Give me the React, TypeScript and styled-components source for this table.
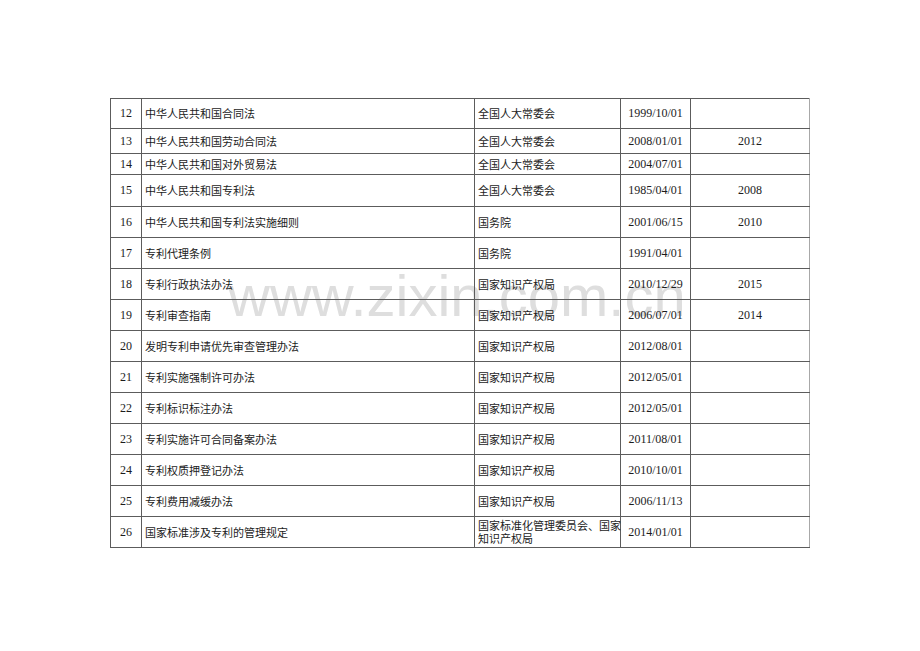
import React from "react";
import styled, { createGlobalStyle } from "styled-components";

const GlobalStyle = createGlobalStyle`
    html, body {
        margin: 0;
        padding: 0;
        background: #ffffff;
    }
`;

const Page = styled.div`
    position: relative;
    width: 920px;
    height: 651px;
    padding: 98px 0 0 110px;
    box-sizing: border-box;
    background: #ffffff;
    overflow: hidden;
`;

const Watermark = styled.div`
    position: absolute;
    left: 228px;
    top: 267px;
    font-family: "Liberation Sans", Arial, sans-serif;
    font-size: 58px;
    line-height: 1;
    color: #dedede;
    white-space: nowrap;
    pointer-events: none;
    z-index: 0;
`;

const Table = styled.table`
    position: relative;
    z-index: 1;
    border-collapse: collapse;
    table-layout: fixed;
    width: 700px;
    color: #1c1c1c;
`;

const Col = styled.col<{ $w: number }>`
    width: ${(p) => p.$w}px;
`;

const Row = styled.tr<{ $h: number }>`
    height: ${(p) => p.$h}px;
`;

const Cell = styled.td<{ $align?: "left" | "center"; $num?: boolean }>`
    border: 1px solid #5c5c5c;
    padding: 0 0 0 ${(p) => (p.$align === "center" ? 0 : 3)}px;
    text-align: ${(p) => p.$align ?? "left"};
    vertical-align: middle;
    font-family: ${(p) =>
        p.$num
            ? `"Liberation Serif", "Times New Roman", serif`
            : `"Noto Sans CJK SC", sans-serif`};
    font-size: ${(p) => (p.$num ? 12 : 11)}px;
    line-height: 13px;
    white-space: pre;

    &:last-child {
        border-right-color: #a8a8a8;
    }
`;

type Law = {
    no: number;
    name: string;
    org: string;
    date: string;
    rev?: string;
    h?: number;
};

const laws: Law[] = [
    { no: 12, name: "中华人民共和国合同法", org: "全国人大常委会", date: "1999/10/01", h: 30 },
    { no: 13, name: "中华人民共和国劳动合同法", org: "全国人大常委会", date: "2008/01/01", rev: "2012", h: 25 },
    { no: 14, name: "中华人民共和国对外贸易法", org: "全国人大常委会", date: "2004/07/01", h: 21 },
    { no: 15, name: "中华人民共和国专利法", org: "全国人大常委会", date: "1985/04/01", rev: "2008", h: 32 },
    { no: 16, name: "中华人民共和国专利法实施细则", org: "国务院", date: "2001/06/15", rev: "2010" },
    { no: 17, name: "专利代理条例", org: "国务院", date: "1991/04/01" },
    { no: 18, name: "专利行政执法办法", org: "国家知识产权局", date: "2010/12/29", rev: "2015" },
    { no: 19, name: "专利审查指南", org: "国家知识产权局", date: "2006/07/01", rev: "2014" },
    { no: 20, name: "发明专利申请优先审查管理办法", org: "国家知识产权局", date: "2012/08/01" },
    { no: 21, name: "专利实施强制许可办法", org: "国家知识产权局", date: "2012/05/01" },
    { no: 22, name: "专利标识标注办法", org: "国家知识产权局", date: "2012/05/01" },
    { no: 23, name: "专利实施许可合同备案办法", org: "国家知识产权局", date: "2011/08/01" },
    { no: 24, name: "专利权质押登记办法", org: "国家知识产权局", date: "2010/10/01" },
    { no: 25, name: "专利费用减缓办法", org: "国家知识产权局", date: "2006/11/13" },
    { no: 26, name: "国家标准涉及专利的管理规定", org: "国家标准化管理委员会、国家\n知识产权局", date: "2014/01/01" },
];

const widths = [31, 333, 146, 70, 119];

const App = () => {
    return (
        <>
            <GlobalStyle />
            <Page>
                <Watermark>www.zixin.com.cn</Watermark>
                <Table>
                    <colgroup>
                        {widths.map((w, i) => (
                            <Col key={i} $w={w} />
                        ))}
                    </colgroup>
                    <tbody>
                        {laws.map((law) => (
                            <Row key={law.no} $h={law.h ?? 31}>
                                <Cell $align="center" $num>
                                    {law.no}
                                </Cell>
                                <Cell>{law.name}</Cell>
                                <Cell>{law.org}</Cell>
                                <Cell $align="center" $num>
                                    {law.date}
                                </Cell>
                                <Cell $align="center" $num>
                                    {law.rev ?? ""}
                                </Cell>
                            </Row>
                        ))}
                    </tbody>
                </Table>
            </Page>
        </>
    );
};

export default App;
